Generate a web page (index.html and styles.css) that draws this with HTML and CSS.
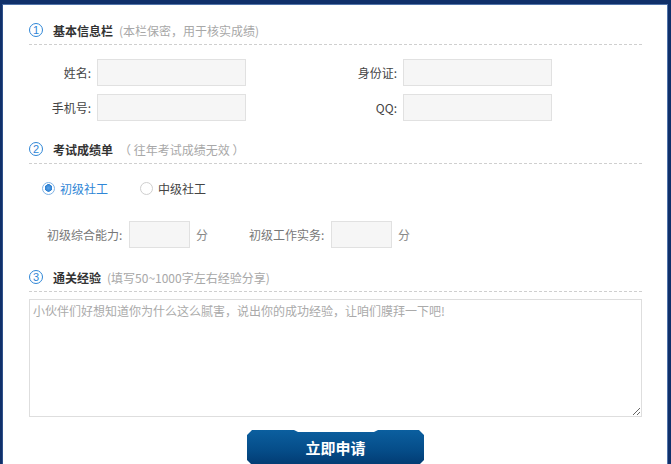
FILE: index.html
```html
<!DOCTYPE html>
<html lang="zh-CN">
<head>
<meta charset="utf-8">
<title>报名表</title>
<link rel="stylesheet" href="styles.css">
</head>
<body>
<div class="page">
  <div class="inner">
    <div class="sec-head first">
      <span class="num">1</span>
      <span class="sec-title">基本信息栏</span>
      <span class="sec-sub">(本栏保密，用于核实成绩)</span>
    </div>
    <div class="grid">
      <div class="field"><label class="lbl">姓名:</label><input class="inp" type="text"></div>
      <div class="field"><label class="lbl">身份证:</label><input class="inp" type="text"></div>
      <div class="field"><label class="lbl">手机号:</label><input class="inp" type="text"></div>
      <div class="field"><label class="lbl">QQ:</label><input class="inp" type="text"></div>
    </div>

    <div class="sec-head second">
      <span class="num">2</span>
      <span class="sec-title">考试成绩单</span>
      <span class="sec-sub">（ 往年考试成绩无效 ）</span>
    </div>
    <div class="radios">
      <span class="radio on"><span class="dot"></span><span class="rtext">初级社工</span></span>
      <span class="radio"><span class="dot"></span><span class="rtext">中级社工</span></span>
    </div>
    <div class="scores">
      <span class="slbl">初级综合能力:</span><input class="sinp" type="text"><span class="unit">分</span>
      <span class="slbl second-lbl">初级工作实务:</span><input class="sinp" type="text"><span class="unit">分</span>
    </div>

    <div class="sec-head third">
      <span class="num">3</span>
      <span class="sec-title">通关经验</span>
      <span class="sec-sub">(填写50~1000字左右经验分享)</span>
    </div>
    <textarea class="story" placeholder="小伙伴们好想知道你为什么这么腻害，说出你的成功经验，让咱们膜拜一下吧!"></textarea>
    <div class="btn-row">
      <button class="submit" type="button">立即申请</button>
    </div>
  </div>
</div>
</body>
</html>
```

FILE: styles.css
```css
html, body {
  margin: 0;
  padding: 0;
  overflow: hidden;
  background: #fff;
}
body {
  font-family: "Microsoft YaHei", "Noto Sans CJK SC", "Noto Sans", sans-serif;
  font-size: 12px;
  color: #444;
}
.page {
  box-sizing: border-box;
  height: 100vh;
  border-top: 4px solid #10306a;
  border-left: 2px solid #10306a;
  border-right: 3px solid #10306a;
  overflow: hidden;
}
.inner {
  box-sizing: border-box;
  height: 100%;
  border-top: 1px solid #5174aa;
  border-left: 1px solid #2e508a;
  border-right: 1px solid #5174aa;
  padding: 0 25px 0 26px;
}
.sec-head {
  display: flex;
  align-items: center;
  height: 26px;
  border-bottom: 1px dashed #cfcfcf;
}
.sec-head.first { margin-top: 13px; }
.sec-head.second { margin-top: 16px; }
.sec-head.third { margin-top: 17px; }
.num {
  box-sizing: border-box;
  width: 14px;
  height: 14px;
  border: 1px solid #2f86d6;
  border-radius: 50%;
  color: #2f86d6;
  font-size: 11px;
  line-height: 12px;
  text-align: center;
  font-family: "Liberation Sans", Arial, sans-serif;
  margin-top: -2px;
}
.sec-title {
  margin-left: 10px;
  font-weight: bold;
  color: #333;
  line-height: 16px;
}
.sec-sub {
  margin-left: 6px;
  color: #a8a8a8;
  line-height: 16px;
}
.grid {
  display: grid;
  grid-template-columns: 306px 306px;
  row-gap: 8px;
  margin-top: 14px;
}
.field {
  display: flex;
  align-items: center;
}
.lbl {
  width: 62px;
  margin-right: 6px;
  text-align: right;
  color: #444;
}
.inp {
  box-sizing: border-box;
  width: 149px;
  height: 27px;
  margin: 0;
  border: 1px solid #e1e1e1;
  background: #f6f6f6;
  outline: none;
}
.radios {
  display: flex;
  align-items: center;
  height: 20px;
  margin-top: 14px;
  padding-left: 13px;
}
.radio {
  display: flex;
  align-items: center;
  margin-right: 32px;
  color: #444;
}
.radio.on { color: #2f86d6; }
.dot {
  box-sizing: border-box;
  width: 13px;
  height: 13px;
  border-radius: 50%;
  border: 1px solid #cfcfcf;
  background: #fff;
  margin-right: 5px;
}
.radio.on .dot {
  border: 1px solid #7fb3e6;
  background: radial-gradient(circle at 50% 45%, #5ea6ea 0, #2d7fd0 3.5px, #fff 4px);
}
.scores {
  display: flex;
  align-items: center;
  margin-top: 23px;
  padding-left: 18px;
  color: #777;
}
.slbl { flex: none; width: 76px; margin-right: 6px; white-space: nowrap; }
.second-lbl { margin-left: 41px; }
.sinp {
  flex: none;
  box-sizing: border-box;
  width: 61px;
  height: 27px;
  margin: 0;
  border: 1px solid #e1e1e1;
  background: #f6f6f6;
  outline: none;
}
.unit { flex: none; width: 12px; margin-left: 6px; color: #888; font-size: 12px; }
.story {
  display: block;
  box-sizing: border-box;
  width: 613px;
  height: 118px;
  margin: 7px 0 0 0;
  padding: 3px 3px;
  border: 1px solid #dedede;
  background: #fff;
  font-family: "Microsoft YaHei", "Noto Sans CJK SC", sans-serif;
  font-size: 12px;
  line-height: 16px;
  color: #444;
  outline: none;
}
.story::placeholder { color: #aaa; }
.btn-row {
  display: flex;
  justify-content: center;
  margin-top: 13px;
}
.submit {
  width: 177px;
  height: 35px;
  border: 0;
  padding: 0;
  background: linear-gradient(#0b5f9f, #054c88 60%, #023b72);
  color: #fff;
  font-family: "Microsoft YaHei", "Noto Sans CJK SC", sans-serif;
  font-size: 15px;
  font-weight: bold;
  line-height: 35px;
  clip-path: polygon(5px 0, 47px 0, 51px 2px, 127px 2px, 131px 0, 172px 0, 177px 5px, 177px 30px, 172px 35px, 5px 35px, 0 30px, 0 5px);
  cursor: pointer;
}
```
